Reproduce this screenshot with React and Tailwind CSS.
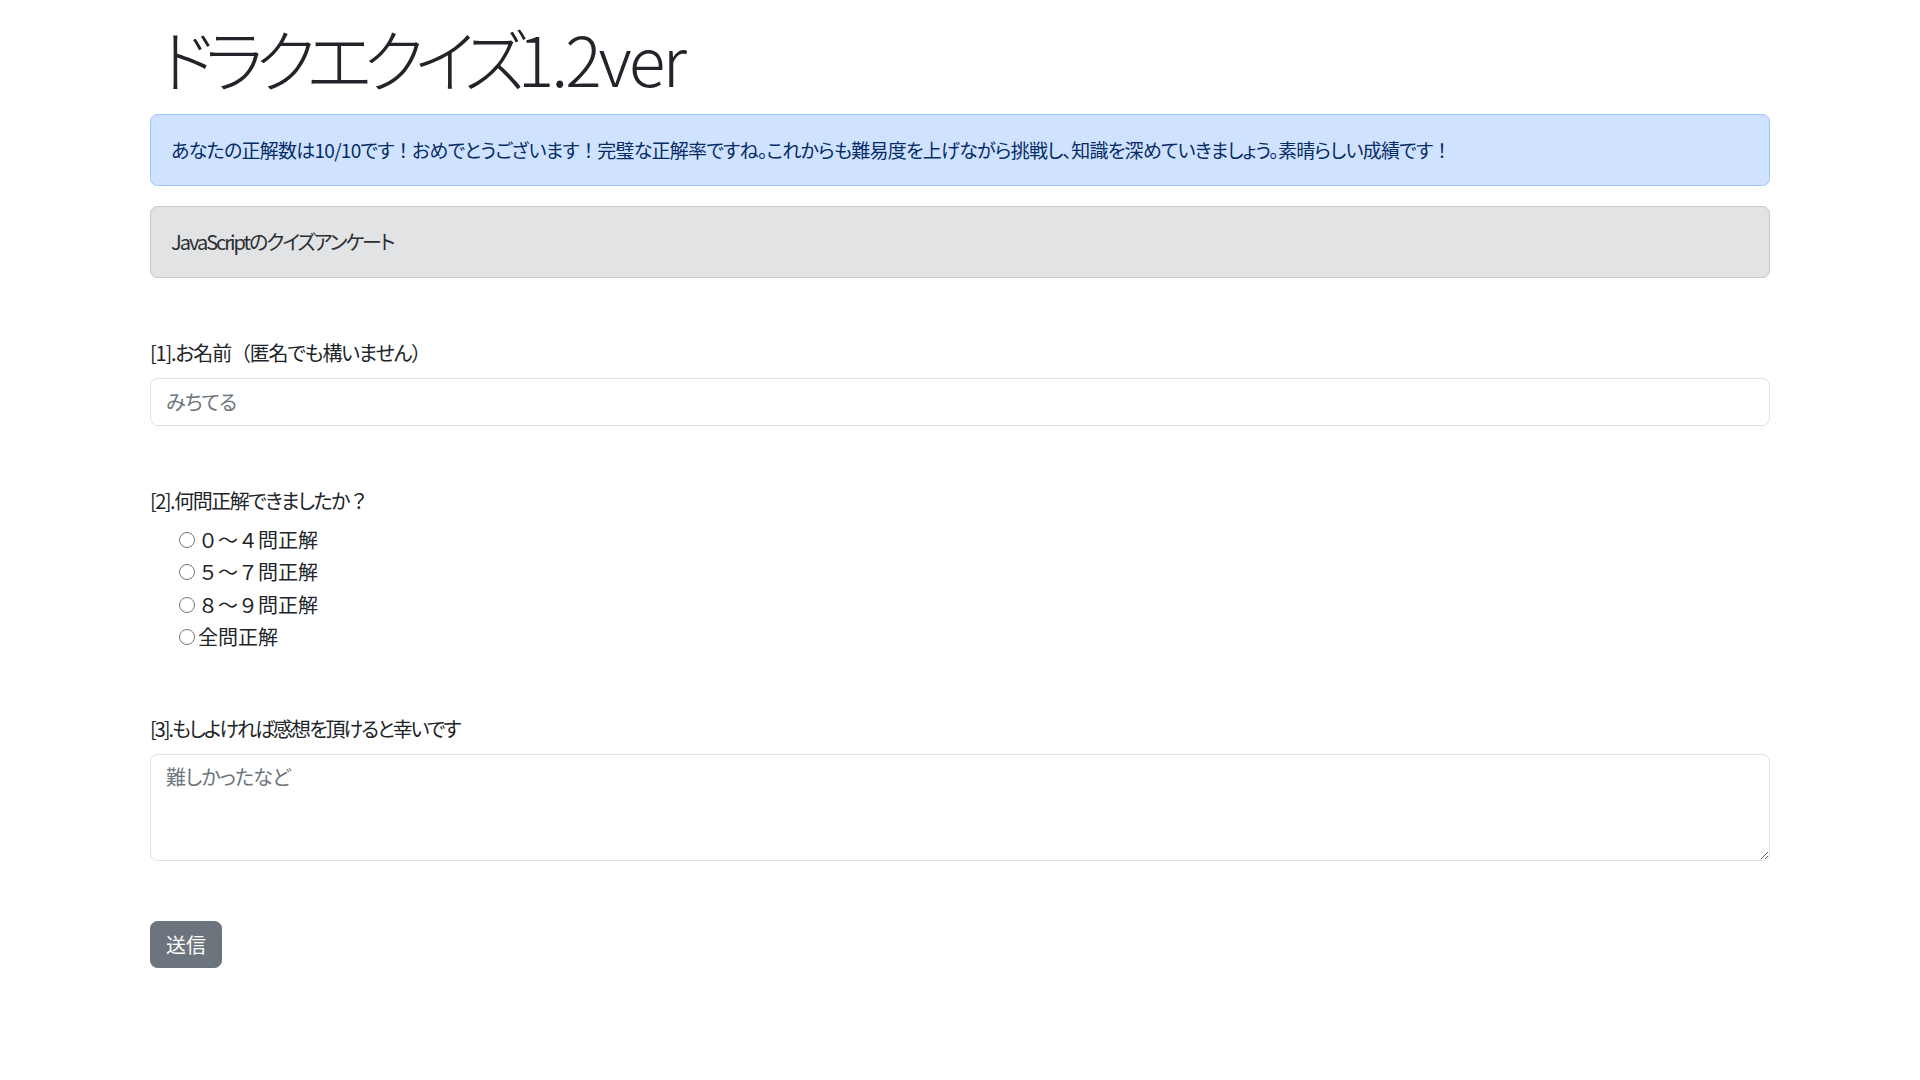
import React, { useState } from 'react';

const jp = "font-['Noto_Sans_CJK_JP','Noto_Sans',sans-serif]";

const choices = ['０～４問正解', '５～７問正解', '８～９問正解', '全問正解'];

// 全角の記号だけは詰めずに表示する
const Wide = ({ children }) => (
  <span className="[font-feature-settings:normal]">{children}</span>
);

const App = () => {
  const [name, setName] = useState('');
  const [answer, setAnswer] = useState('');
  const [comment, setComment] = useState('');

  return (
    <div className={`min-h-screen bg-white text-[#212529] text-[20px] leading-[30px] ${jp}`}>
      <div className="mx-auto w-[1650px] px-[15px]">
        <h1 className="pt-[10px] pl-[10px] mb-[8px] text-[68px] leading-[96px] font-light [font-feature-settings:'palt']">
          <span className="tracking-[-9px]">ドラクエクイズ</span>
          <span className="tracking-[-3px]">1.2ver</span>
        </h1>

        <div className="mb-[20px] p-[20px] border border-[#9ec5fe] rounded-[7.5px] bg-[#cfe2ff] text-[#052c65] text-[19px] tracking-[-0.75px] [font-feature-settings:'palt']">
          あなたの正解数は10/10です<Wide>！</Wide>おめでとうございます<Wide>！</Wide>完璧な正解率ですね。これからも難易度を上げながら挑戦し、知識を深めていきましょう。素晴らしい成績です<Wide>！</Wide>
        </div>

        <div className="p-[20px] border border-[#c4c8cb] rounded-[7.5px] bg-[#e2e3e5] text-[#2b2f32] tracking-[-2px] [font-feature-settings:'palt']">
          JavaScriptのクイズアンケート
        </div>

        <form onSubmit={(e) => e.preventDefault()}>
          {/* [1] 名前 */}
          <div className="mt-[60px]">
            <label className="block mb-[10px] tracking-[-1.2px] [font-feature-settings:'palt']">
              [1].お名前<Wide>（</Wide>匿名でも構いません<Wide>）</Wide>
            </label>
            <input
              type="text"
              placeholder="みちてる"
              value={name}
              onChange={(e) => setName(e.target.value)}
              className="block w-full h-[47.5px] px-[15px] py-[7.5px] border border-[#dee2e6] rounded-[7.5px] outline-none placeholder:text-[#6c757d] tracking-[-0.8px] [font-feature-settings:'palt']"
            />
          </div>

          {/* [2] 正解数 */}
          <div className="mt-[60px]">
            <label className="block mb-[8px] tracking-[-1.5px] [font-feature-settings:'palt']">
              [2].何問正解できましたか<Wide>？</Wide>
            </label>
            <div className="pl-[29px]">
              {choices.map((c) => (
                <label key={c} className="flex items-center h-[32.5px] cursor-pointer">
                  <input
                    type="radio"
                    name="answer"
                    value={c}
                    checked={answer === c}
                    onChange={() => setAnswer(c)}
                    className="m-0 mr-[3px] w-[16px] h-[16px]"
                  />
                  <span>{c}</span>
                </label>
              ))}
            </div>
          </div>

          {/* [3] 感想 */}
          <div className="mt-[60px]">
            <label className="block mb-[10px] tracking-[-2px] [font-feature-settings:'palt']">
              [3].もしよければ感想を頂けると幸いです
            </label>
            <textarea
              rows={3}
              placeholder="難しかったなど"
              value={comment}
              onChange={(e) => setComment(e.target.value)}
              className="block w-full h-[107.5px] px-[15px] py-[7.5px] border border-[#dee2e6] rounded-[7.5px] outline-none resize-y placeholder:text-[#6c757d] tracking-[-0.8px] [font-feature-settings:'palt']"
            />
          </div>

          <button
            type="submit"
            className="mt-[60px] px-[15px] py-[7.5px] border border-[#6c757d] rounded-[7.5px] bg-[#6c757d] text-white leading-[30px] cursor-pointer"
          >
            送信
          </button>
        </form>
      </div>
    </div>
  );
};

export default App;
